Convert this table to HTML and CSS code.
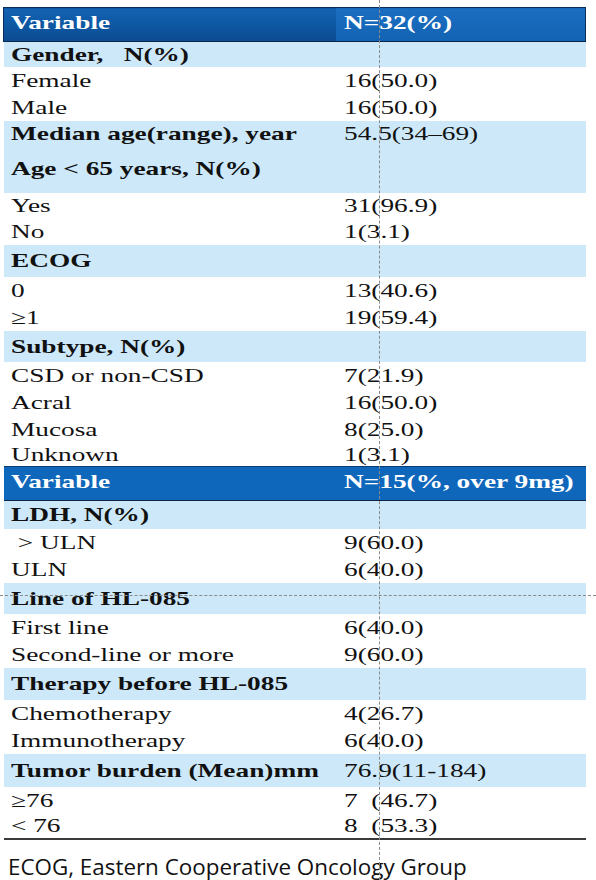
FILE: index.html
```html
<!DOCTYPE html>
<html lang="en">
<head>
    <meta charset="UTF-8">
    <meta name="viewport" content="width=device-width, initial-scale=1.0">
    <title>Baseline characteristics</title>
    <link rel="stylesheet" href="styles.css">
</head>
<body>
    <table class="tbl">
        <colgroup>
            <col class="col-var">
            <col class="col-val">
        </colgroup>
        <tr class="head head-main">
            <td><span class="t">Variable</span></td>
            <td class="head-n"><span class="t">N=32(%)</span></td>
        </tr>
        <tr class="band band-sm">
            <td><span class="t">Gender,&nbsp;&nbsp;&nbsp;N(%)</span></td>
            <td></td>
        </tr>
        <tr class="row"><td><span class="t">Female</span></td><td><span class="t">16(50.0)</span></td></tr>
        <tr class="row"><td><span class="t">Male</span></td><td><span class="t">16(50.0)</span></td></tr>
        <tr class="band band-double">
            <td>
                <div class="line"><span class="t">Median age(range), year</span></div>
                <div class="line line-2"><span class="t">Age &lt; 65 years, N(%)</span></div>
            </td>
            <td class="val-top"><div class="line"><span class="t normal">54.5(34–69)</span></div></td>
        </tr>
        <tr class="row row-sm"><td><span class="t">Yes</span></td><td><span class="t">31(96.9)</span></td></tr>
        <tr class="row row-sm"><td><span class="t">No</span></td><td><span class="t">1(3.1)</span></td></tr>
        <tr class="band band-lg"><td><span class="t">ECOG</span></td><td></td></tr>
        <tr class="row"><td><span class="t">0</span></td><td><span class="t">13(40.6)</span></td></tr>
        <tr class="row"><td><span class="t">≥1</span></td><td><span class="t">19(59.4)</span></td></tr>
        <tr class="band"><td><span class="t">Subtype, N(%)</span></td><td></td></tr>
        <tr class="row"><td><span class="t">CSD or non-CSD</span></td><td><span class="t">7(21.9)</span></td></tr>
        <tr class="row"><td><span class="t">Acral</span></td><td><span class="t">16(50.0)</span></td></tr>
        <tr class="row"><td><span class="t">Mucosa</span></td><td><span class="t">8(25.0)</span></td></tr>
        <tr class="row row-end"><td><span class="t">Unknown</span></td><td><span class="t">1(3.1)</span></td></tr>
        <tr class="head head-sub">
            <td><span class="t">Variable</span></td>
            <td><span class="t">N=15(%, over 9mg)</span></td>
        </tr>
        <tr class="band band-md"><td><span class="t">LDH, N(%)</span></td><td></td></tr>
        <tr class="row"><td><span class="t">&nbsp;&gt; ULN</span></td><td><span class="t">9(60.0)</span></td></tr>
        <tr class="row"><td><span class="t">ULN</span></td><td><span class="t">6(40.0)</span></td></tr>
        <tr class="band"><td><span class="t">Line of HL-085</span></td><td></td></tr>
        <tr class="row"><td><span class="t">First line</span></td><td><span class="t">6(40.0)</span></td></tr>
        <tr class="row"><td><span class="t">Second-line or more</span></td><td><span class="t">9(60.0)</span></td></tr>
        <tr class="band band-lg"><td><span class="t">Therapy before HL-085</span></td><td></td></tr>
        <tr class="row"><td><span class="t">Chemotherapy</span></td><td><span class="t">4(26.7)</span></td></tr>
        <tr class="row"><td><span class="t">Immunotherapy</span></td><td><span class="t">6(40.0)</span></td></tr>
        <tr class="band band-xl"><td><span class="t">Tumor burden (Mean)mm</span></td><td><span class="t normal">76.9(11-184)</span></td></tr>
        <tr class="row"><td><span class="t">≥76</span></td><td><span class="t">7&nbsp;&nbsp;(46.7)</span></td></tr>
        <tr class="row row-end last"><td><span class="t">&lt; 76</span></td><td><span class="t">8&nbsp;&nbsp;(53.3)</span></td></tr>
    </table>

    <p class="note">ECOG, Eastern Cooperative Oncology Group</p>

    <div class="guide guide-v"></div>
    <div class="guide guide-h"></div>
</body>
</html>
```

FILE: styles.css
```css
body {
    margin: 0;
    padding: 7px 0 0 3px;
    font-family: "Liberation Serif", "Times New Roman", serif;
    background-color: #fff;
    color: #111;
    position: relative;
    height: 873px;
    overflow: hidden;
}
.tbl {
    width: 582px;
    border-collapse: collapse;
    table-layout: fixed;
    font-size: 19.5px;
}
.col-var {
    width: 332px;
}
.col-val {
    width: 250px;
}
td {
    padding: 1px 0 0 7px;
    vertical-align: middle;
    white-space: nowrap;
    line-height: 22px;
}
td + td {
    padding-left: 8px;
}
.t {
    display: inline-block;
    transform: scaleX(1.4);
    transform-origin: 0 50%;
}

/* header rows */
.head td {
    color: #fff;
    font-weight: bold;
    padding-top: 0;
    padding-bottom: 4px;
}
.head-main {
    height: 34px;
}
.head-main td {
    background: linear-gradient(180deg, #1363b3 0%, #0d559f 60%, #0b4b92 100%);
    border-top: 1px solid #0b2f5c;
    border-bottom: 1px solid #0a2547;
}
.head-main td:first-child {
    border-left: 1px solid #0b2f5c;
}
.head-main td:last-child {
    border-right: 1px solid #0b2f5c;
}
.head-main .head-n {
    background: linear-gradient(180deg, #1a6dc0 0%, #1363b3 100%);
}
.head-sub {
    height: 34px;
}
.head-sub td {
    background-color: #0f67bb;
    border-top: 1px solid #0b3a6e;
    border-bottom: 1px solid #0a2547;
}

/* shaded group rows */
.band td {
    background-color: #cce8f9;
    font-weight: bold;
}
.band td + td {
    font-weight: normal;
}
.band {
    height: 31px;
}
.band-sm {
    height: 25px;
}
.band-md {
    height: 28px;
}
.band-lg {
    height: 32px;
}
.band-xl {
    height: 33px;
}
.band-double {
    height: 72px;
}
.band-double td {
    vertical-align: top;
    padding-top: 0;
}
.line {
    line-height: 26px;
}
.line-2 {
    margin-top: 9px;
}
.normal {
    font-weight: normal;
}

/* plain rows */
.row {
    height: 27px;
}
.row-sm {
    height: 26px;
}
.row-end {
    height: 24px;
}
.last {
    height: 25px;
}
.last td {
    border-bottom: 2px solid #3a3a3a;
}

.note {
    margin: 13px 0 0 5px;
    font-family: "Open Sans", "Noto Sans", sans-serif;
    font-size: 22.4px;
    line-height: 28px;
    color: #111;
    white-space: nowrap;
}

/* dashed guide lines laid over the table */
.guide {
    position: absolute;
    z-index: 2;
}
.guide-v {
    left: 379px;
    top: 0;
    height: 880px;
    border-left: 1px dashed #8a8a8a;
}
.guide-h {
    left: 0;
    top: 595px;
    width: 596px;
    border-top: 1px dashed #8a8a8a;
}
```
